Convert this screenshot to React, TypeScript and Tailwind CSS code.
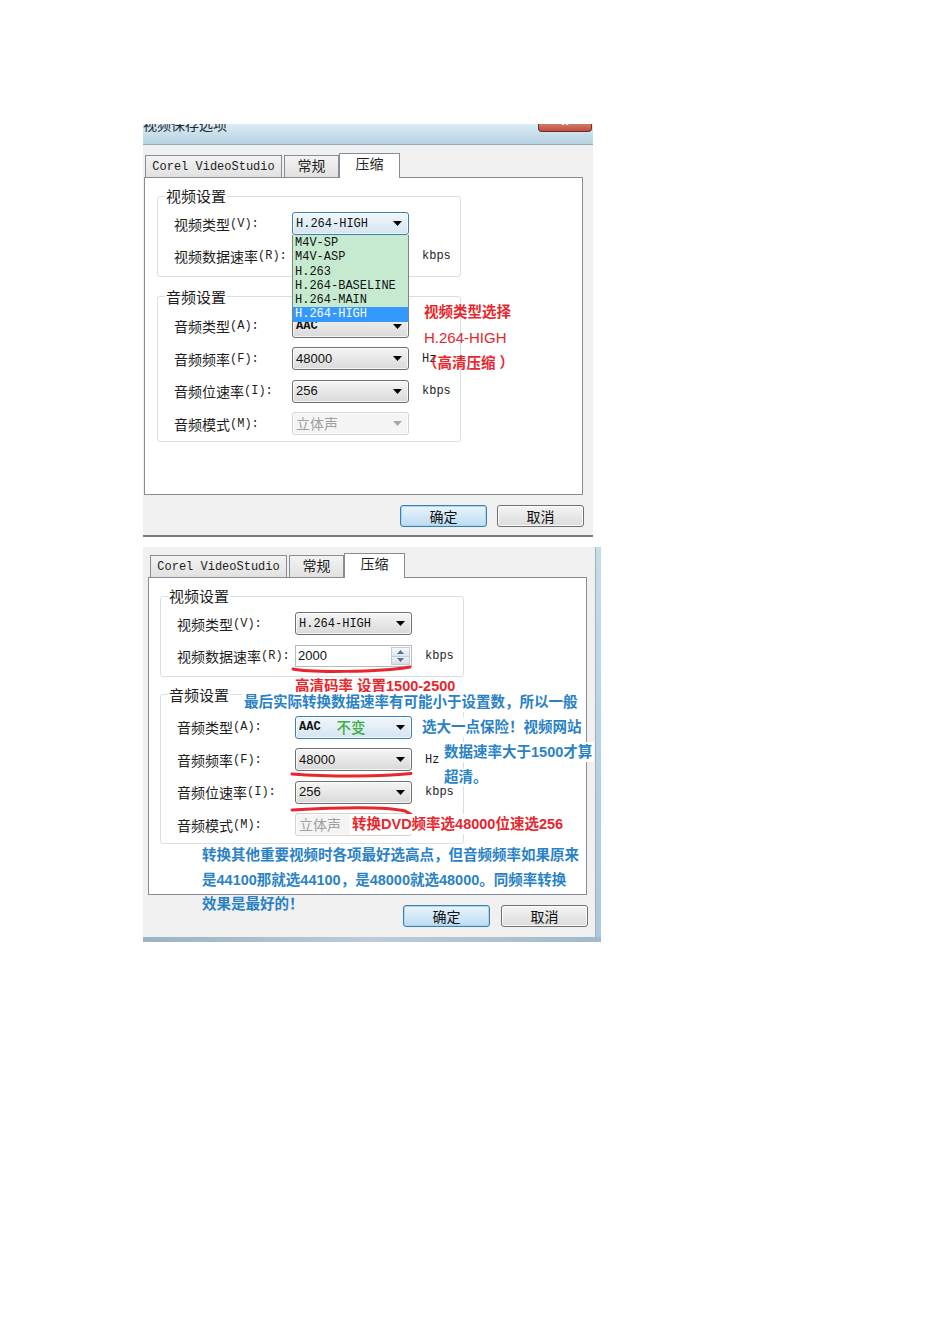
import React from "react";

const CJK = "font-['Noto_Sans_CJK_SC',sans-serif]";
const MONO = "font-['Liberation_Mono','Noto_Sans_CJK_SC',monospace]";
const SANS = "font-['Liberation_Sans','Noto_Sans_CJK_SC',sans-serif]";

function Lbl({ cn, en }: { cn: string; en: string }) {
  return (
    <div className="flex w-[118px] items-center whitespace-nowrap text-[#1e1e1e]">
      <span className={`${CJK} text-[14px] leading-none`}>{cn}</span>
      <span className={`${MONO} text-[12px] leading-none`}>({en}):</span>
    </div>
  );
}

type Variant = "normal" | "focus" | "disabled";

function Combo({ variant = "normal", children }: { variant?: Variant; children: React.ReactNode }) {
  const cls =
    variant === "focus"
      ? "border-[#3c7fb1] bg-linear-to-b from-[#f2f7fb] to-[#d3e4f1]"
      : variant === "disabled"
      ? "border-[#d3d3d3] bg-[#f4f4f4]"
      : "border-[#707070] bg-linear-to-b from-[#f5f5f5] to-[#d9d9d9]";
  return (
    <div
      className={`flex h-[23px] w-[117px] items-center justify-between rounded-[3px] border pl-[3px] pr-[6px] shadow-[inset_0_0_0_1px_rgba(255,255,255,0.7)] ${cls}`}
    >
      <div className="flex items-center whitespace-nowrap">{children}</div>
      <svg width="9" height="5" viewBox="0 0 9 5">
        <path d="M0 0H9L4.5 5Z" fill={variant === "disabled" ? "#a8a8a8" : "#000"} />
      </svg>
    </div>
  );
}

function Spin() {
  return (
    <div className="flex h-[22px] w-[117px] items-stretch border border-[#b5b9c0] bg-white">
      <div className={`${SANS} flex flex-1 items-center pl-[2px] text-[13px] text-[#111]`}>2000</div>
      <div className="my-[1px] mr-[1px] flex w-[19px] flex-col border border-[#c3ccd6]">
        <div className="flex flex-1 items-center justify-center border-b border-[#c3ccd6] bg-linear-to-b from-[#f6f8fa] to-[#dde5ee]">
          <svg width="7" height="4" viewBox="0 0 7 4">
            <path d="M0 4H7L3.5 0Z" fill="#5a6f8f" />
          </svg>
        </div>
        <div className="flex flex-1 items-center justify-center bg-linear-to-b from-[#eef2f6] to-[#d5dee8]">
          <svg width="7" height="4" viewBox="0 0 7 4">
            <path d="M0 0H7L3.5 4Z" fill="#5a6f8f" />
          </svg>
        </div>
      </div>
    </div>
  );
}

function Unit({ t }: { t: string }) {
  return <span className={`${MONO} ml-[13px] text-[12px] leading-none text-[#1e1e1e]`}>{t}</span>;
}

function Row({ children }: { children: React.ReactNode }) {
  return <div className="flex h-[23px] items-center">{children}</div>;
}

function Group({
  title,
  children,
  pt,
  pb,
  mt,
}: {
  title: string;
  children: React.ReactNode;
  pt: string;
  pb: string;
  mt?: string;
}) {
  return (
    <fieldset className={`w-[304px] rounded-[3px] border border-[#d5dfe5] px-0 ${pt} ${pb} ${mt ?? ""}`}>
      <legend className={`${CJK} ml-[7px] px-[1px] text-[15px] leading-[18px] text-[#1e1e1e]`}>{title}</legend>
      <div className="flex flex-col gap-[9.5px] pl-[16px]">{children}</div>
    </fieldset>
  );
}

function Tabs({ ml }: { ml: string }) {
  const inactive =
    "mb-[1px] flex h-[22px] items-center justify-center border border-b-0 border-[#898c95] bg-linear-to-b from-[#f3f3f3] to-[#e1e1e1]";
  return (
    <div className={`relative z-10 -mb-[1px] flex items-end ${ml}`}>
      <div className={`${inactive} w-[137px]`}>
        <span className={`${MONO} text-[12px] text-[#1e1e1e]`}>Corel VideoStudio</span>
      </div>
      <div className={`${inactive} ml-[2px] w-[55px]`}>
        <span className={`${CJK} -mt-[2px] text-[14px] text-[#1e1e1e]`}>常规</span>
      </div>
      <div className="flex h-[25px] w-[61px] items-start justify-center border border-b-0 border-[#898c95] bg-white">
        <span className={`${CJK} -mt-[1px] text-[14px] text-[#1e1e1e]`}>压缩</span>
      </div>
    </div>
  );
}

function Buttons({ gap }: { gap: string }) {
  return (
    <div className={`mt-[10px] flex w-[440px] justify-end ${gap}`}>
      <div
        className={`${CJK} flex h-[22px] w-[87px] items-center justify-center rounded-[3px] border border-[#3c7fb1] bg-linear-to-b from-[#eaf5fc] to-[#bcdcf1] text-[14px] text-[#111] shadow-[inset_0_0_0_1px_#a9d6f2]`}
      >
        确定
      </div>
      <div
        className={`${CJK} flex h-[22px] w-[87px] items-center justify-center rounded-[3px] border border-[#707070] bg-linear-to-b from-[#f4f4f4] to-[#dcdcdc] text-[14px] text-[#111] shadow-[inset_0_0_0_1px_rgba(255,255,255,0.8)]`}
      >
        取消
      </div>
    </div>
  );
}

const RED = "text-[#e8262d]";
const BLUE = "text-[#2a82c6]";
const ANN = `${SANS} text-[14.5px] leading-[20px] whitespace-nowrap font-bold`;

function Dialog1() {
  const items = ["M4V-SP", "M4V-ASP", "H.263", "H.264-BASELINE", "H.264-MAIN", "H.264-HIGH"];
  return (
    <div className="relative w-[450px]">
      <div className="flex h-[21px] items-start justify-between overflow-hidden border-b border-[#97a9b5] bg-linear-to-b from-[#dcebf4] to-[#b6d2e2]">
        <span className={`${CJK} -mt-[8px] text-[14px] leading-[16px] text-[#1c2a33]`}>视频保存选项</span>
        <div className="mr-[1px] flex h-[8px] w-[54px] justify-center overflow-hidden rounded-b-[4px] border border-t-0 border-[#6e2f28] bg-linear-to-b from-[#d27a68] to-[#c0503e]">
          <span className={`${SANS} -mt-[10px] text-[12px] font-bold leading-[14px] text-white`}>x</span>
        </div>
      </div>
      <div className="border-b-2 border-[#737b82] bg-[#f0f0f0] pb-[8px] pl-[1px] pt-[8px]">
        <Tabs ml="ml-[1px]" />
        <div className="h-[318px] w-[439px] border border-[#898c95] bg-white pl-[12px] pt-[9px]">
          <Group title="视频设置" pt="pt-[7px]" pb="pb-[8px]">
            <Row>
              <Lbl cn="视频类型" en="V" />
              <Combo variant="focus">
                <span className={`${MONO} text-[12px] text-[#111]`}>H.264-HIGH</span>
              </Combo>
            </Row>
            <Row>
              <Lbl cn="视频数据速率" en="R" />
              <div className="w-[117px]" />
              <Unit t="kbps" />
            </Row>
          </Group>
          <Group title="音频设置" pt="pt-[9px]" pb="pb-[6px]" mt="mt-[11px]">
            <Row>
              <Lbl cn="音频类型" en="A" />
              <Combo>
                <span className={`${MONO} text-[12px] font-bold text-[#111]`}>AAC</span>
              </Combo>
            </Row>
            <Row>
              <Lbl cn="音频频率" en="F" />
              <Combo>
                <span className={`${SANS} text-[13px] text-[#111]`}>48000</span>
              </Combo>
              <Unit t="Hz" />
            </Row>
            <Row>
              <Lbl cn="音频位速率" en="I" />
              <Combo>
                <span className={`${SANS} text-[13px] text-[#111]`}>256</span>
              </Combo>
              <Unit t="kbps" />
            </Row>
            <Row>
              <Lbl cn="音频模式" en="M" />
              <Combo variant="disabled">
                <span className={`${CJK} text-[14px] text-[#a0a0a0]`}>立体声</span>
              </Combo>
            </Row>
          </Group>
        </div>
        <Buttons gap="gap-[10px]" />
      </div>

      {/* open dropdown list */}
      <div className="absolute left-[149px] top-[111px] z-20 flex h-[87px] w-[117px] flex-col border-x border-b border-[#7a8a80] bg-[#c6ead0] pt-[1px]">
        {items.map((it, i) => (
          <div
            key={it}
            className={`${MONO} h-[14.3px] pl-[2px] text-[12px] leading-[14.3px] ${
              i === items.length - 1 ? "bg-[#3399ff] text-white" : "text-[#111]"
            }`}
          >
            {it}
          </div>
        ))}
      </div>

      <div className={`absolute left-[281px] top-[178px] ${ANN} ${RED}`}>视频类型选择</div>
      <div className={`absolute left-[281px] top-[204px] ${SANS} text-[15px] font-medium leading-[20px] ${RED}`}>H.264-HIGH</div>
      <div className={`absolute left-[280px] top-[229px] ${ANN} ${RED}`}>（高清压缩 ）</div>
    </div>
  );
}

function Dialog2() {
  return (
    <div className="relative w-[458px]">
      <div className="flex">
        <div className="w-[452px] bg-[#f0f0f0] pb-[10px] pl-[5px] pt-[6px]">
          <Tabs ml="ml-[2px]" />
          <div className="h-[318px] w-[439px] border border-[#898c95] bg-white pl-[11px] pt-[9px]">
            <Group title="视频设置" pt="pt-[7px]" pb="pb-[8px]">
              <Row>
                <Lbl cn="视频类型" en="V" />
                <Combo>
                  <span className={`${MONO} text-[12px] text-[#111]`}>H.264-HIGH</span>
                </Combo>
              </Row>
              <Row>
                <Lbl cn="视频数据速率" en="R" />
                <Spin />
                <Unit t="kbps" />
              </Row>
            </Group>
            <Group title="音频设置" pt="pt-[12px]" pb="pb-[7px]" mt="mt-[9px]">
              <Row>
                <Lbl cn="音频类型" en="A" />
                <Combo variant="focus">
                  <span className={`${MONO} text-[12px] font-bold text-[#111]`}>AAC</span>
                  <span className={`${CJK} ml-[16px] text-[14.5px] font-medium text-[#3cb043]`}>不变</span>
                </Combo>
              </Row>
              <Row>
                <Lbl cn="音频频率" en="F" />
                <Combo>
                  <span className={`${SANS} text-[13px] text-[#111]`}>48000</span>
                </Combo>
                <Unit t="Hz" />
              </Row>
              <Row>
                <Lbl cn="音频位速率" en="I" />
                <Combo>
                  <span className={`${SANS} text-[13px] text-[#111]`}>256</span>
                </Combo>
                <Unit t="kbps" />
              </Row>
              <Row>
                <Lbl cn="音频模式" en="M" />
                <Combo variant="disabled">
                  <span className={`${CJK} text-[14px] text-[#a0a0a0]`}>立体声</span>
                </Combo>
              </Row>
            </Group>
          </div>
          <Buttons gap="gap-[11px]" />
        </div>
        <div className="w-[1px] bg-[#a9aeb2]" />
        <div className="w-[5px] bg-linear-to-b from-[#c4dde9] to-[#a9c9dc]" />
      </div>
      <div className="h-[5px] bg-linear-to-r from-[#9db2c2] via-[#bccbd7] to-[#a3b8c8]" />

      {/* red underlines */}
      <svg className="pointer-events-none absolute left-0 top-0" width="458" height="396" viewBox="0 0 458 396">
        <path d="M150 122 C 165 125.5, 235 125.5, 267 120" stroke="#e8262d" strokeWidth="3" fill="none" strokeLinecap="round" />
        <path d="M149 227 C 190 230, 240 229.5, 268 226.5" stroke="#e8262d" strokeWidth="3" fill="none" strokeLinecap="round" />
        <path d="M149 263 C 200 260, 245 260, 262 264 L 269 268" stroke="#e8262d" strokeWidth="3" fill="none" strokeLinecap="round" />
      </svg>

      <div className={`absolute left-[152px] top-[129px] ${ANN} ${RED}`}>高清码率 设置1500-2500</div>
      <div className={`absolute left-[99px] top-[145px] bg-white pl-[2px] pr-[4px] ${ANN} ${BLUE}`}>
        最后实际转换数据速率有可能小于设置数，所以一般
      </div>
      <div className={`absolute left-[277px] top-[170px] bg-white pl-[2px] pr-[4px] ${ANN} ${BLUE}`}>
        选大一点保险！视频网站
      </div>
      <div className={`absolute left-[299px] top-[195px] bg-white pl-[2px] pr-[2px] ${ANN} ${BLUE}`}>
        数据速率大于1500才算
      </div>
      <div className={`absolute left-[299px] top-[222px] bg-white pl-[2px] pr-[2px] ${SANS} text-[14.5px] font-bold leading-[17px] whitespace-nowrap ${BLUE}`}>
        超清。
      </div>
      <div className={`absolute left-[207px] top-[267px] bg-white pl-[2px] pr-[4px] ${ANN} ${RED}`}>
        转换DVD频率选48000位速选256
      </div>
      <div className={`absolute left-[59px] top-[296px] flex flex-col ${SANS} text-[14.5px] font-bold leading-[24.5px] whitespace-nowrap ${BLUE}`}>
        <span>转换其他重要视频时各项最好选高点，但音频频率如果原来</span>
        <span>是44100那就选44100，是48000就选48000。同频率转换</span>
        <span>效果是最好的！</span>
      </div>
    </div>
  );
}

export default function App() {
  return (
    <div className="min-h-[1344px] w-[950px] bg-white pl-[143px] pt-[124px]">
      <Dialog1 />
      <div className="h-[10px]" />
      <Dialog2 />
    </div>
  );
}
